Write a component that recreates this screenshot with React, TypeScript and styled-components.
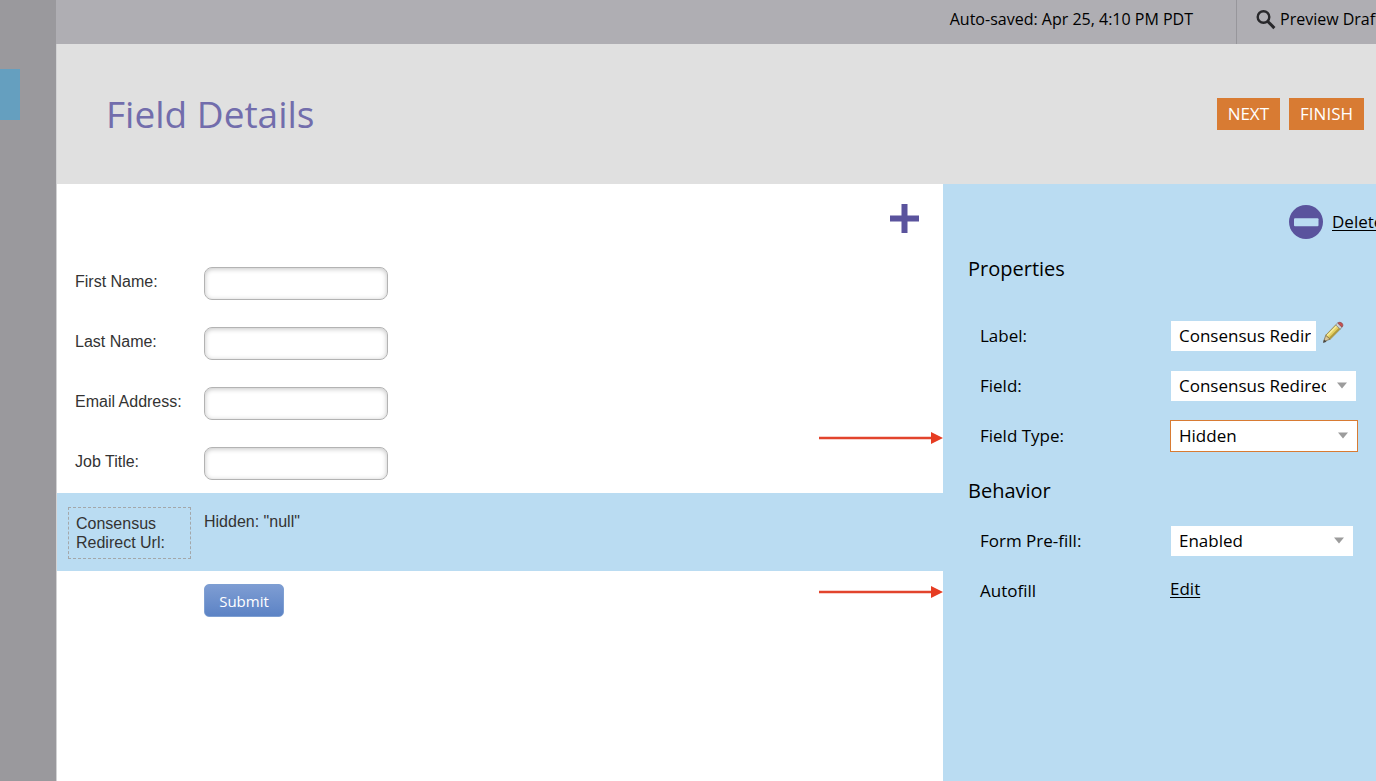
import React from "react";
import styled, { createGlobalStyle, css } from "styled-components";

const blue = "#badcf2";
const purple = "#5a539d";
const orange = "#d87b33";

const GlobalStyle = createGlobalStyle`
  *, *::before, *::after { box-sizing: border-box; }
  body {
    margin: 0;
    overflow-x: hidden;
    font-family: "Open Sans", "Noto Sans", sans-serif;
    font-size: 17px;
    color: #000;
  }
  h1, h2 { margin: 0; font-weight: 400; }
  button, input, select { font-family: inherit; margin: 0; }
`;

const Page = styled.div`
  display: flex;
  min-height: 100vh;
  overflow: hidden;
`;

const Sidebar = styled.aside`
  flex: 0 0 56px;
  padding-top: 69px;
  background: #9a999d;
`;

const SidebarTab = styled.div`
  width: 20px;
  height: 51px;
  background: #659fbf;
`;

const Main = styled.main`
  flex: 1;
  min-width: 0;
  display: flex;
  flex-direction: column;
`;

const TopBar = styled.div`
  display: flex;
  justify-content: flex-end;
  height: 44px;
  background: #afaeb3;
  font-size: 16px;
  line-height: 38px;
  white-space: nowrap;
`;

const SaveStatus = styled.span`
  padding-right: 43px;
`;

const PreviewButton = styled.button`
  flex: none;
  width: 140px;
  display: flex;
  gap: 4px;
  padding: 0 0 0 19px;
  border: 0;
  border-left: 1px solid #97969b;
  background: none;
  color: inherit;
  font-size: 16px;
  line-height: 38px;
  white-space: nowrap;
  svg { flex: none; margin-top: 9px; }
`;

const Header = styled.header`
  display: flex;
  align-items: center;
  justify-content: space-between;
  height: 140px;
  padding: 0 12px 0 49px;
  background: #e0e0e0;
  border-left: 1px solid #d2d2d4;
`;

const Title = styled.h1`
  color: #726dac;
  font-size: 37px;
  line-height: 48px;
`;

const HeaderActions = styled.div`
  display: flex;
  gap: 9px;
`;

const ActionButton = styled.button`
  height: 32px;
  padding: 0 11px;
  border: 0;
  background: ${orange};
  color: #fff;
  font-size: 17px;
  line-height: 32px;
`;

const Workspace = styled.div`
  flex: 1;
  display: grid;
  grid-template-columns: minmax(0, 1fr) 433px;
`;

const FormPreview = styled.form`
  border-left: 1px solid #d2d2d4;
  background: #fff;
  color: #333;
  font-family: "Liberation Sans", Arial, sans-serif;
  font-size: 16px;
  line-height: 19px;
`;

const FormToolbar = styled.div`
  display: flex;
  justify-content: flex-end;
  height: 69px;
  padding: 20px 24px 0 0;
`;

const IconButton = styled.button`
  display: block;
  height: 30px;
  padding: 0;
  border: 0;
  background: none;
  svg { display: block; }
`;

const FormRow = styled.div<{ $selected?: boolean }>`
  display: grid;
  grid-template-columns: 129px 1fr;
  align-items: start;
  min-height: ${(p) => (p.$selected ? 78 : 60)}px;
  padding: 14px 0 0 18px;
  background: ${(p) => (p.$selected ? blue : "transparent")};
`;

const FormLabel = styled.label`
  padding-top: 5px;
`;

const SelectedLabel = styled.div`
  width: 123px;
  height: 52px;
  margin-left: -7px;
  padding: 6px 7px;
  border: 1px dashed #a3a7aa;
`;

const HiddenValue = styled.span`
  padding-top: 5px;
`;

const FormInput = styled.input`
  width: 184px;
  height: 33px;
  padding: 0 8px;
  border: 1px solid #b3b3b3;
  border-radius: 8px;
  background: #fff;
  box-shadow: inset 0 1px 5px rgba(0, 0, 0, 0.24);
  font-size: 16px;
`;

const SubmitButton = styled.button`
  display: block;
  width: 80px;
  height: 33px;
  margin: 13px 0 0 147px;
  padding: 0;
  border: 1px solid #7e9fd2;
  border-radius: 5px;
  background: linear-gradient(#7e9dd3, #5c83c5);
  color: #fff;
  && { font-family: "Open Sans", "Noto Sans", sans-serif; }
  font-size: 15px;
`;

const Panel = styled.section`
  min-width: 0;
  padding: 21px 0 24px 25px;
  background: ${blue};
`;

const DeleteRow = styled.div`
  display: flex;
  align-items: center;
  height: 34px;
  padding-left: 321px;
`;

const TextLink = styled.a`
  color: inherit;
  text-decoration: underline;
  text-underline-offset: 2px;
`;

const DeleteLink = styled(TextLink)`
  display: flex;
  align-items: center;
  gap: 9px;
  line-height: 34px;
  white-space: nowrap;
  svg { flex: none; }
`;

const Section = styled.div`
  padding-top: 5px;
`;

const SectionTitle = styled.h2<{ $spaced?: boolean }>`
  height: 50px;
  margin-bottom: ${(p) => (p.$spaced ? 17 : 0)}px;
  font-size: 20px;
  line-height: 50px;
`;

const PropertyRow = styled.div<{ $short?: boolean }>`
  position: relative;
  display: grid;
  grid-template-columns: 190px 1fr;
  align-items: center;
  height: ${(p) => (p.$short ? 48 : 50)}px;
  padding-left: 12px;
`;

const PropertyLabel = styled.label`
  padding-bottom: 2px;
`;

const LinkCell = styled.span`
  padding-bottom: 4px;
`;

const ControlGroup = styled.div`
  display: flex;
  align-items: center;
  gap: 5px;
`;

const control = css`
  height: 32px;
  border: 1px solid transparent;
  border-radius: 0;
  background: #fff;
  background-clip: padding-box;
  color: #000;
  font-size: 17px;
`;

const PropertyInput = styled.input`
  ${control}
  width: 147px;
  padding: 0 5px 2px 8px;
`;

const SelectBox = styled.div<{ $width: number }>`
  display: grid;
  grid-template-columns: 1fr 12px 8px;
  align-items: center;
  width: ${(p) => p.$width}px;
  svg { grid-area: 1 / 2; pointer-events: none; }
`;

const PropertySelect = styled.select<{ $active?: boolean }>`
  ${control}
  grid-area: 1 / 1 / 2 / 4;
  width: 100%;
  padding: 0 30px 2px 8px;
  appearance: none;
  border-color: ${(p) => (p.$active ? orange : "transparent")};
`;

const ArrowSvg = styled.svg`
  position: absolute;
  top: calc(50% - 5px);
  right: 100%;
  margin-right: 25px;
`;

function PointerArrow() {
  return (
    <ArrowSvg width="124" height="14" viewBox="0 0 124 14" aria-hidden="true">
      <path d="M0 7H113" stroke="#e2442c" strokeWidth="2.4" />
      <path d="M112 1L124 7L112 13Z" fill="#e63c22" />
    </ArrowSvg>
  );
}

function SearchIcon() {
  return (
    <svg width="20" height="21" viewBox="0 0 20 21" fill="none" stroke="#28282b" aria-hidden="true">
      <circle cx="7.5" cy="8" r="5.8" strokeWidth="2.4" />
      <path d="M11.8 12.5L18.4 19.1" strokeWidth="3" />
    </svg>
  );
}

function PencilIcon() {
  return (
    <svg width="22" height="30" viewBox="0 0 22 30" aria-hidden="true">
      <path d="M1.6 20.5L3.8 14.2L8.2 18.2Z" fill="#dcc79a" stroke="#7c6d4e" strokeWidth=".8" />
      <path d="M1 22L2.1 18.4L4.6 20.7Z" fill="#4a4843" />
      <path d="M3.8 14.2L14 3.6L18.5 7.8L8.2 18.2Z" fill="#e4d062" stroke="#83713a" strokeWidth=".8" />
      <path d="M5.2 14.6L14.6 5" stroke="#f4ea9c" strokeWidth="1.6" />
      <path d="M7.8 17L17.2 7.6" stroke="#b09b3e" strokeWidth="1.5" />
      <path d="M13.7 3.9L15.6 2L20 6.2L18.2 8.1Z" fill="#ccd3d6" stroke="#87898c" strokeWidth=".8" />
      <path d="M15.8 2C17.2 .8 18.8 1.2 20 2.3C21.1 3.4 21.2 5 20 6.2Z" fill="#c94f4f" stroke="#914b4d" strokeWidth=".8" />
    </svg>
  );
}

function DropDown(props: { id: string; value: string; width: number; active?: boolean }) {
  return (
    <SelectBox $width={props.width}>
      <PropertySelect id={props.id} $active={props.active}>
        <option>{props.value}</option>
      </PropertySelect>
      <svg width="10" height="10" viewBox="0 0 10 10" aria-hidden="true">
        <path d="M0 1.5H10L5 7.5Z" fill="#9c9c9c" />
      </svg>
    </SelectBox>
  );
}

const fields = [
  { id: "first-name", label: "First Name:" },
  { id: "last-name", label: "Last Name:" },
  { id: "email", label: "Email Address:" },
  { id: "job-title", label: "Job Title:" },
];

export default function App() {
  return (
    <>
      <GlobalStyle />
      <Page>
        <Sidebar>
          <SidebarTab />
        </Sidebar>
        <Main>
          <TopBar>
            <SaveStatus>Auto-saved: Apr 25, 4:10 PM PDT</SaveStatus>
            <PreviewButton type="button">
              <SearchIcon />
              Preview Draft
            </PreviewButton>
          </TopBar>
          <Header>
            <Title>Field Details</Title>
            <HeaderActions>
              <ActionButton type="button">NEXT</ActionButton>
              <ActionButton type="button">FINISH</ActionButton>
            </HeaderActions>
          </Header>
          <Workspace>
            <FormPreview onSubmit={(e) => e.preventDefault()}>
              <FormToolbar>
                <IconButton type="button" aria-label="Add field">
                  <svg width="29" height="30" viewBox="0 0 29 30" aria-hidden="true">
                    <path d="M11.5 0H17.5V11.5H29V17.5H17.5V29H11.5V17.5H0V11.5H11.5Z" fill={purple} />
                  </svg>
                </IconButton>
              </FormToolbar>
              {fields.map((field) => (
                <FormRow key={field.id}>
                  <FormLabel htmlFor={field.id}>{field.label}</FormLabel>
                  <FormInput id={field.id} type="text" />
                </FormRow>
              ))}
              <FormRow $selected>
                <SelectedLabel>Consensus Redirect Url:</SelectedLabel>
                <HiddenValue>Hidden: "null"</HiddenValue>
              </FormRow>
              <SubmitButton type="submit">Submit</SubmitButton>
            </FormPreview>
            <Panel>
              <DeleteRow>
                <DeleteLink href="#delete">
                  <svg width="34" height="34" viewBox="0 0 34 34" aria-hidden="true">
                    <circle cx="17" cy="17" r="17" fill={purple} />
                    <rect x="5" y="13.2" width="24.5" height="8" rx="1" fill={blue} />
                  </svg>
                  Delete
                </DeleteLink>
              </DeleteRow>
              <Section>
                <SectionTitle $spaced>Properties</SectionTitle>
                <PropertyRow>
                  <PropertyLabel htmlFor="prop-label">Label:</PropertyLabel>
                  <ControlGroup>
                    <PropertyInput id="prop-label" type="text" defaultValue="Consensus Redirect Url:" />
                    <IconButton type="button" aria-label="Edit label">
                      <PencilIcon />
                    </IconButton>
                  </ControlGroup>
                </PropertyRow>
                <PropertyRow>
                  <PropertyLabel htmlFor="prop-field">Field:</PropertyLabel>
                  <DropDown id="prop-field" value="Consensus Redirect Url" width={187} />
                </PropertyRow>
                <PropertyRow>
                  <PointerArrow />
                  <PropertyLabel htmlFor="prop-type">Field Type:</PropertyLabel>
                  <DropDown id="prop-type" value="Hidden" width={188} active />
                </PropertyRow>
              </Section>
              <Section>
                <SectionTitle>Behavior</SectionTitle>
                <PropertyRow>
                  <PropertyLabel htmlFor="prop-prefill">Form Pre-fill:</PropertyLabel>
                  <DropDown id="prop-prefill" value="Enabled" width={184} />
                </PropertyRow>
                <PropertyRow $short>
                  <PointerArrow />
                  <span>Autofill</span>
                  <LinkCell>
                    <TextLink href="#autofill">Edit</TextLink>
                  </LinkCell>
                </PropertyRow>
              </Section>
            </Panel>
          </Workspace>
        </Main>
      </Page>
    </>
  );
}
